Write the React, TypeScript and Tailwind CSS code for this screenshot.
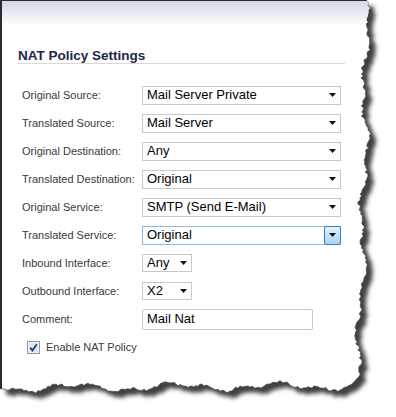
import React from 'react';

const rows = [
  { label: 'Original Source:', value: 'Mail Server Private', kind: 'wide' },
  { label: 'Translated Source:', value: 'Mail Server', kind: 'wide' },
  { label: 'Original Destination:', value: 'Any', kind: 'wide' },
  { label: 'Translated Destination:', value: 'Original', kind: 'wide' },
  { label: 'Original Service:', value: 'SMTP (Send E-Mail)', kind: 'wide' },
  { label: 'Translated Service:', value: 'Original', kind: 'focus' },
  { label: 'Inbound Interface:', value: 'Any', kind: 'small' },
  { label: 'Outbound Interface:', value: 'X2', kind: 'small' },
  { label: 'Comment:', value: 'Mail Nat', kind: 'text' },
];

// seeded noise so the torn edge stays the same every render
const makeRand = (seed: number) => {
  let s = seed;
  return () => {
    s = (s * 16807) % 2147483647;
    return s / 2147483647;
  };
};

const tornPath = () => {
  const r = makeRand(11);
  const pts: string[] = ['M0,0', 'L366,0'];
  for (let y = 0; y <= 376; y += 2) {
    const drift = 8 * Math.pow(y / 380, 2);
    const x = 366 - drift + 3 * Math.sin(y / 19) + 2 * Math.sin(y / 7 + 1) + (r() - 0.5) * 3;
    pts.push(`L${x.toFixed(1)},${y}`);
  }
  pts.push('L352,384');
  for (let x = 346; x >= 0; x -= 2) {
    const y = 388 - 2 * (x / 350) + 3 * Math.sin(x / 16) + 2 * Math.sin(x / 6 + 2) + (r() - 0.5) * 2.5;
    pts.push(`L${x},${y.toFixed(1)}`);
  }
  pts.push('Z');
  return pts.join(' ');
};

const Arrow = () => (
  <svg width="7" height="4" viewBox="0 0 7 4">
    <path d="M0 0 H7 L3.5 4 Z" fill="#111" />
  </svg>
);

const Paper = () => {
  const d = tornPath();
  return (
    <svg className="absolute inset-0" width="396" height="417">
      <defs>
        <filter id="shadowBlur" x="-5%" y="-5%" width="115%" height="115%">
          <feGaussianBlur stdDeviation="2" />
        </filter>
        <linearGradient id="topFade" x1="0" y1="0" x2="0" y2="1">
          <stop offset="0" stopColor="#d3d6e3" />
          <stop offset="1" stopColor="#ffffff" />
        </linearGradient>
        <clipPath id="paperClip">
          <path d={d} />
        </clipPath>
      </defs>
      <path d={d} transform="translate(6,6)" fill="#404040" filter="url(#shadowBlur)" />
      <path d={d} fill="#ffffff" stroke="#4a4a4a" strokeWidth="0.7" />
      <g clipPath="url(#paperClip)">
        <rect x="0" y="0" width="380" height="26" fill="url(#topFade)" />
        <rect x="0" y="0" width="380" height="1" fill="#2b2b2b" />
        <rect x="0" y="0" width="2" height="400" fill="#2b2b2b" />
      </g>
    </svg>
  );
};

const Control = ({ value, kind }: { value: string; kind: string }) => {
  if (kind === 'text') {
    return (
      <div className="w-[171px] h-[21px] border border-[#c8c8c8] rounded-[2px] bg-white flex items-center pl-[4px] text-[13px] text-black">
        {value}
      </div>
    );
  }
  if (kind === 'focus') {
    return (
      <div className="w-[199px] h-[19px] border border-[#8fbbe3] bg-white flex items-center text-[13px] text-black">
        <span className="flex-1 pl-[4px]">{value}</span>
        <div className="w-[17px] h-[19px] -mr-px border border-[#3d7fb8] rounded-[2px] bg-gradient-to-b from-[#e3f2fc] to-[#a6d3f3] flex items-center justify-center">
          <Arrow />
        </div>
      </div>
    );
  }
  return (
    <div
      className={`${kind === 'small' ? 'w-[50px] h-[18px]' : 'w-[199px] h-[19px]'} border border-[#c8c8c8] bg-white flex items-center justify-between pl-[4px] pr-[4px] text-[13px] text-black`}
    >
      <span>{value}</span>
      <Arrow />
    </div>
  );
};

export default function App() {
  return (
    <div className="relative w-[396px] h-[417px] bg-white overflow-hidden font-['Liberation_Sans',Arial,sans-serif]">
      <Paper />
      <div className="relative pt-[49px]">
        <div className="ml-[17px] w-[328px] border-b border-[#d8d8d8] pl-[1px] text-[13.5px] leading-[14px] font-bold text-[#1b2847]">
          NAT Policy Settings
        </div>
        <div className="mt-[17px]">
          {rows.map((row) => (
            <div key={row.label} className="h-[28px] flex items-center">
              <div className="w-[142px] pl-[22px] text-[11px] text-[#3a3a3a]">{row.label}</div>
              <Control value={row.value} kind={row.kind} />
            </div>
          ))}
          <div className="h-[28px] flex items-center pl-[27px] gap-[6px]">
            <svg width="13" height="13" viewBox="0 0 13 13">
              <rect x="0.5" y="0.5" width="12" height="12" fill="#f4f6fa" stroke="#8e97a8" />
              <rect x="2" y="2" width="9" height="9" fill="#dfe6f1" />
              <path d="M3.2 6.6 L5.4 9.4 L9.8 3.2" fill="none" stroke="#243a7a" strokeWidth="1.8" />
            </svg>
            <span className="text-[11px] text-[#3a3a3a]">Enable NAT Policy</span>
          </div>
        </div>
      </div>
    </div>
  );
}
